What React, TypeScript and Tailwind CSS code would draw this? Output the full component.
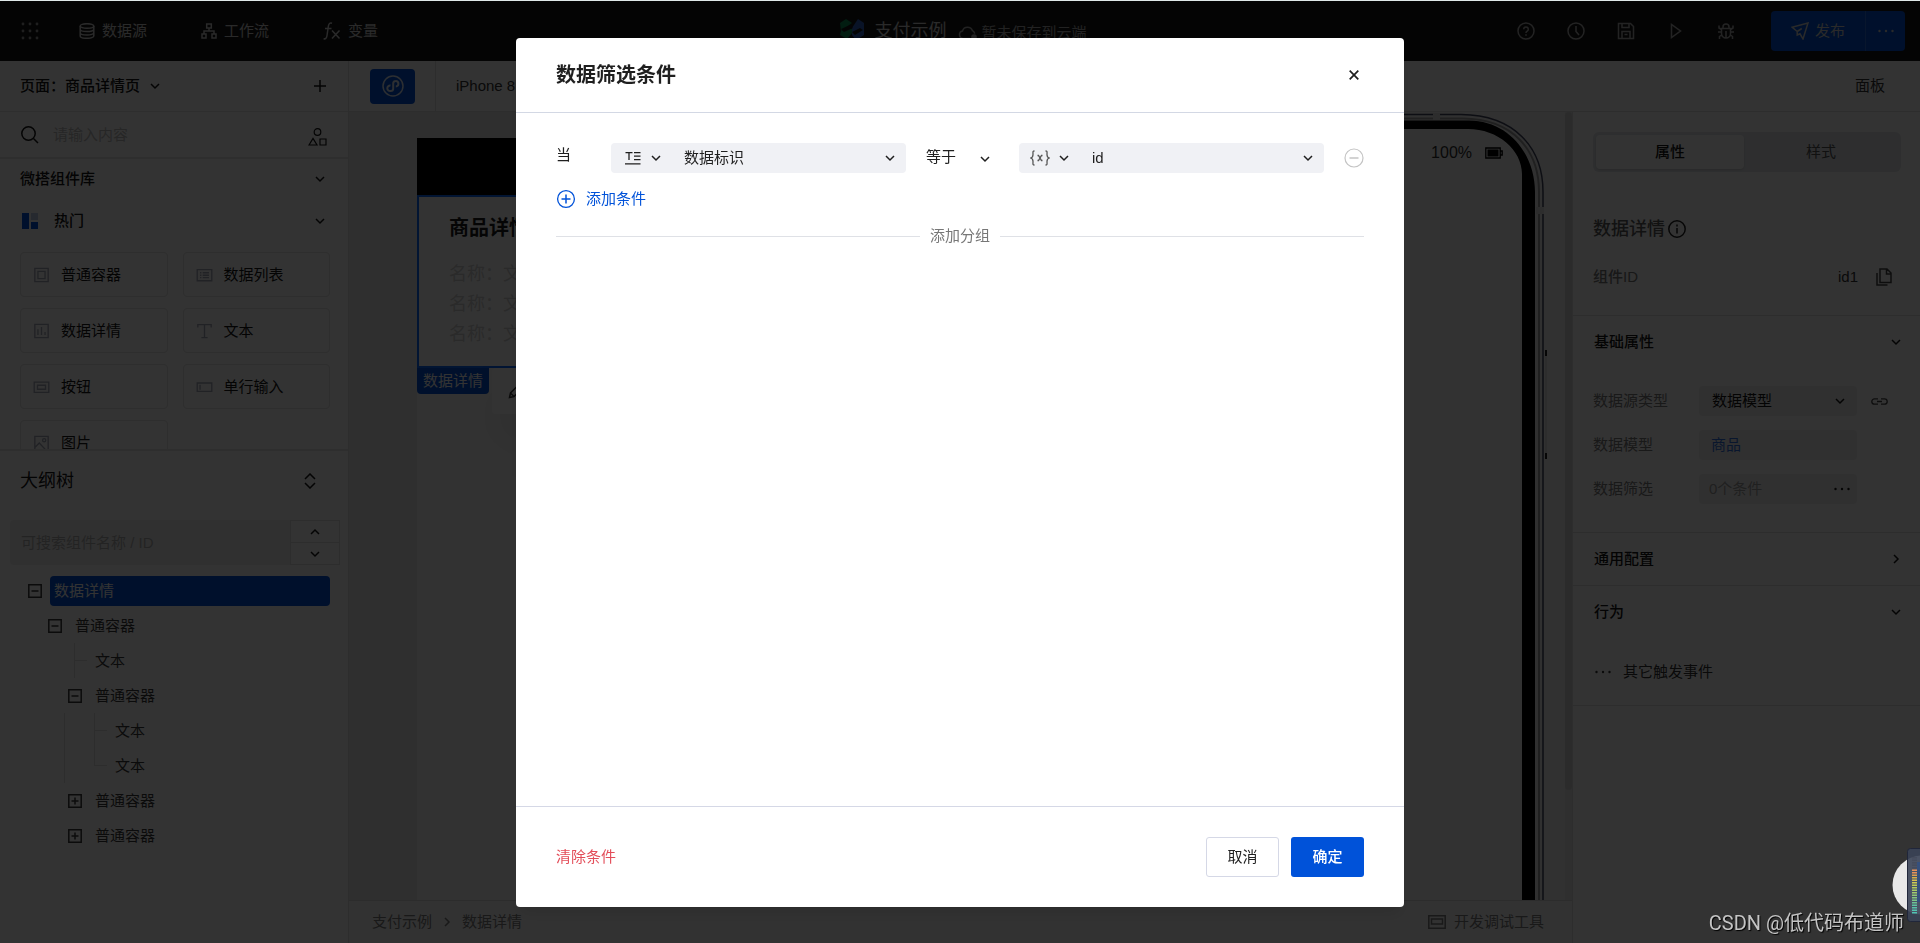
import React from "react";

type IconProps = { className?: string };

const Svg = ({ className = "", box = "0 0 18 18", children }: { className?: string; box?: string; children: React.ReactNode }) => (
  <svg className={`shrink-0 ${className}`} viewBox={box} fill="none" stroke="currentColor" strokeWidth="1.5" aria-hidden="true">
    {children}
  </svg>
);

const Chevron = ({ className = "" }: IconProps) => (
  <Svg className={`h-[10px] w-[10px] ${className}`} box="0 0 10 10">
    <path d="M1 3l4 4 4-4" />
  </Svg>
);

const GridDots = () => (
  <svg className="h-[18px] w-[18px] shrink-0" viewBox="0 0 18 18" fill="currentColor" aria-hidden="true">
    {[2, 9, 16].map((y) => [2, 9, 16].map((x) => <circle key={`${x}-${y}`} cx={x} cy={y} r="1.4" />))}
  </svg>
);

const Database = () => (
  <Svg className="h-4 w-4" box="0 0 16 16">
    <ellipse cx="8" cy="3" rx="6.8" ry="2.3" />
    <path d="M1.2 3v10c0 1.3 3 2.3 6.8 2.3s6.8-1 6.8-2.3V3M1.2 6.3C1.2 7.6 4.2 8.6 8 8.6s6.8-1 6.8-2.3M1.2 9.7c0 1.3 3 2.3 6.8 2.3s6.8-1 6.8-2.3" />
  </Svg>
);

const Workflow = () => (
  <Svg className="h-4 w-4" box="0 0 16 16">
    <path d="M5.7 1h4.6v4H5.7zM1 11h4v4H1zM11 11h4v4h-4zM8 5v3M3 11V8h10v3" />
  </Svg>
);

const Fx = () => (
  <Svg className="h-[18px] w-[18px]">
    <path d="M9 1.2C6.8.6 5.8 1.6 5.4 4L4 13.5C3.6 16 2.700 17.200.6 16.800M2 6.500h6.500M9 8.500l7.500 8M16.500 8.500l-7.500 8" />
  </Svg>
);

const Logo = () => (
  <svg className="h-6 w-6 shrink-0" viewBox="0 0 24 24" aria-hidden="true">
    <path d="M0 4l6-4 6 4-11 8zM1 12l10-3 3 3-7 8-7-4z" fill="#0b8f55" />
    <path d="M12 9l6-9 6 4v12l-8 5-4-5z" fill="#2f62c4" />
    <path d="M1 10l9-4 3 3-9 4zM12 13l8-4 3 2-8 5z" fill="#181818" />
  </svg>
);

const Cloud = () => (
  <Svg className="h-[14px] w-5" box="0 0 20 14">
    <path d="M12 12.500H5a3.800 3.800 0 01-.5-7.500A5.300 5.300 0 0114.500 4.700c1.200.6 2 1.500 2.200 3" />
    <circle cx="16" cy="11" r="2.800" fill="currentColor" stroke="none" />
  </Svg>
);

const Help = () => (
  <Svg className="h-[18px] w-[18px]">
    <circle cx="9" cy="9" r="8" />
    <path d="M6.700 7.200a2.300 2.300 0 113.500 2C9.300 9.800 9 10.200 9 11M9 12.300v1.500" />
  </Svg>
);
const Clock = () => (
  <Svg className="h-[18px] w-[18px]">
    <circle cx="9" cy="9" r="8" />
    <path d="M9 4v5.500l3 3.500" />
  </Svg>
);
const Save = () => (
  <Svg className="h-[18px] w-[18px]">
    <path d="M1.500 1.500h12l3 3v12h-15zM5 16.500V9.500h8v7M5 1.500v4h7v-4M7.500 12.500h3" />
  </Svg>
);
const Play = () => (
  <Svg className="h-[18px] w-[18px]">
    <path d="M4.500 2.500v13l9-6.500z" />
  </Svg>
);
const Bug = () => (
  <Svg className="h-[18px] w-[18px]">
    <path d="M4.500 6.500h9v5a4.500 4.500 0 01-9 0zM6 6.500V5a3 3 0 016 0v1.500M9 9v7M4.500 10H1M17 10h-3.500M4.500 7.500L2 6V3.500M13.500 7.500L16 6V3.500M4.500 13L2.500 14.500V17M13.500 13l2 1.500V17" />
  </Svg>
);
const Send = () => (
  <Svg className="h-[18px] w-[18px]">
    <path d="M17 1L1 5.200 6.200 9.500V13L9 11.800 12 17zM6.200 9.500l4.600-3" />
  </Svg>
);
const Dots = ({ className = "" }: IconProps) => (
  <svg className={`h-[4px] w-[18px] shrink-0 ${className}`} viewBox="0 0 18 4" fill="currentColor" aria-hidden="true">
    <circle cx="2.500" cy="2" r="1.200" />
    <circle cx="9" cy="2" r="1.200" />
    <circle cx="15.500" cy="2" r="1.200" />
  </svg>
);

const cardIcons: Record<string, React.ReactNode> = {
  普通容器: <path d="M1.500 1.500h15v15h-15zM5 5h8v8H5z" />,
  数据列表: <path d="M.8 3h16.400v12.500H.8zM4 6.500h1.500M7 6.500h7M4 9.300h1.500M7 9.300h7M4 12h1.500M7 12h7" />,
  数据详情: <path d="M1.500 1.500h15v15h-15zM5 7v6.500M9 4.500v9M13 10v3.500" />,
  文本: <path d="M1.500 5V1.800h15V5M9 1.800v14.700M5.500 16.500h7" />,
  按钮: <path d="M.8 3.500h16.400v11.500H.8zM4.500 7h9v4.500h-9z" />,
  单行输入: <path d="M.8 4.500h16.400v9.500H.8zM4 6.500v5.500" />,
  图片: (
    <>
      <path d="M1.500 1.500h15v15h-15zM1.500 14l5-5 7 7.500" />
      <circle cx="12" cy="5.800" r="1.800" />
    </>
  ),
};

function TopBar() {
  const nav: [React.ReactNode, string][] = [
    [<Database />, "数据源"],
    [<Workflow />, "工作流"],
    [<Fx />, "变量"],
  ];
  const tools: [string, React.ReactNode][] = [
    ["帮助", <Help />],
    ["历史", <Clock />],
    ["保存", <Save />],
    ["预览", <Play />],
    ["调试", <Bug />],
  ];
  return (
    <header className="flex h-[61px] shrink-0 items-center justify-between bg-[#181818] pl-[21px] pr-[15px] pt-px text-[#d0d0d0]">
      <div className="flex flex-1 items-center">
        <button aria-label="应用" className="mr-10 text-[#9a9a9a]">
          <GridDots />
        </button>
        <nav className="flex items-center gap-[54px]">
          {nav.map(([icon, label]) => (
            <a key={label} href="#" className="flex items-center gap-[7px]">
              {icon}
              {label}
            </a>
          ))}
        </nav>
      </div>
      <div className="flex items-center gap-[11px]">
        <Logo />
        <span className="text-lg leading-6">支付示例</span>
        <span className="flex items-center gap-1 pt-1 text-[#a8a8a8]">
          <Cloud />
          暂未保存到云端
        </span>
      </div>
      <div className="flex flex-1 items-center justify-end">
        <div className="mr-9 flex items-center gap-8 text-[#b0b0b0]">
          {tools.map(([label, icon]) => (
            <button key={label} aria-label={label}>
              {icon}
            </button>
          ))}
        </div>
        <div className="flex h-10 overflow-hidden rounded bg-[#0052d9]">
          <button className="flex w-[94px] items-center justify-center gap-[6px]">
            <Send />
            发布
          </button>
          <button aria-label="更多" className="flex w-10 items-center justify-center border-l border-[#2c70e0]">
            <Dots />
          </button>
        </div>
      </div>
    </header>
  );
}

function Toggle({ open }: { open: boolean }) {
  return (
    <button aria-label={open ? "收起" : "展开"}>
      <Svg className="h-[14px] w-[14px]" box="0 0 14 14">
        <path d={open ? "M.8.8h12.400v12.400H.8zM3.500 7h7" : "M.8.8h12.400v12.400H.8zM3.500 7h7M7 3.500v7"} />
      </Svg>
    </button>
  );
}

function Leaf({ last = false }: { last?: boolean }) {
  return (
    <li className="flex h-[35px] items-center">
      <span className="flex h-full w-[21px] flex-col">
        <span className="h-[18px] w-[13px] border-b border-l border-[#e0e0e0]" />
        <span className={last ? "flex-1" : "flex-1 border-l border-[#e0e0e0]"} />
      </span>
      文本
    </li>
  );
}

function Branch({ open, children }: { open: boolean; children?: React.ReactNode }) {
  return (
    <li>
      <div className="flex h-[35px] items-center gap-[13px]">
        <Toggle open={open} />
        普通容器
      </div>
      {children}
    </li>
  );
}

function Sidebar() {
  return (
    <aside className="flex w-[348px] shrink-0 flex-col bg-white text-[#141414]">
      <div className="flex h-[51px] shrink-0 items-center border-b border-[#e3e3e3] px-5">
        <button className="flex items-center gap-[10px] font-medium">
          页面：商品详情页
          <Chevron />
        </button>
        <button aria-label="新建页面" className="ml-auto mr-[2px]">
          <Svg className="h-3 w-3" box="0 0 12 12">
            <path d="M6 0v12M0 6h12" />
          </Svg>
        </button>
      </div>
      <label className="flex h-[47px] shrink-0 items-center border-b-2 border-[#e3e3e3] px-[21px]">
        <Svg className="h-[18px] w-[18px]">
          <circle cx="7.500" cy="7.500" r="6.700" />
          <path d="M12.500 12.500l4.500 4.500" />
        </Svg>
        <input aria-label="搜索组件" placeholder="请输入内容" className="ml-[14px] min-w-0 flex-1 bg-transparent outline-none placeholder:text-[#bdbdbd]" />
        <Svg className="mt-[5px] h-[18px] w-[19px]" box="0 0 19 18">
          <circle cx="9.500" cy="4" r="3.300" strokeWidth="1.200" />
          <path d="M1 17l4-6.500L9 17zM12 11h6v6h-6z" strokeWidth="1.200" />
        </Svg>
      </label>
      <section className="flex h-[290px] shrink-0 flex-col overflow-hidden">
        <button className="flex h-10 shrink-0 items-center justify-between pl-5 pr-[23px] font-medium">
          微搭组件库
          <Chevron />
        </button>
        <button className="flex h-[43px] shrink-0 items-center pl-[22px] pr-[23px] font-medium">
          <svg className="mr-4 h-4 w-4" viewBox="0 0 16 16" aria-hidden="true">
            <path d="M0 0h7v16H0zM9 9h7v7H9z" fill="#0052d9" />
            <path d="M9 0h7v7H9z" fill="#bccbe8" />
          </svg>
          热门
          <Chevron className="ml-auto" />
        </button>
        <div className="mt-[10px] grid grid-cols-2 gap-x-[15px] gap-y-[11px] pl-5 pr-[18px]">
          {Object.keys(cardIcons).map((name) => (
            <button key={name} className="flex h-[45px] items-center gap-[11px] rounded border border-[#e3e3e3] pl-3 text-left">
              <Svg className="h-4 w-[17px] text-[#a4a8b8]">{cardIcons[name]}</Svg>
              {name}
            </button>
          ))}
        </div>
      </section>
      <section className="flex min-h-0 flex-1 flex-col border-t-2 border-[#e3e3e3]">
        <div className="flex h-[60px] shrink-0 items-center justify-between pl-5 pr-8 text-lg">
          大纲树
          <Svg className="h-4 w-3" box="0 0 12 16">
            <path d="M1 6l5-5 5 5M1 10l5 5 5-5" />
          </Svg>
        </div>
        <div className="mx-[10px] mr-2 mt-[9px] flex h-[45px] shrink-0">
          <input
            aria-label="搜索大纲"
            placeholder="可搜索组件名称 / ID"
            className="min-w-0 flex-1 rounded-l bg-[#f0f0f0] px-[11px] outline-none placeholder:text-[#b0b0b0]"
          />
          <div className="flex w-[50px] flex-col border border-[#e0e0e0]">
            <button aria-label="上一个" className="flex flex-1 items-center justify-center border-b border-[#e0e0e0]">
              <Chevron className="rotate-180" />
            </button>
            <button aria-label="下一个" className="flex flex-1 items-center justify-center">
              <Chevron />
            </button>
          </div>
        </div>
        <ul className="pl-7 pr-[18px] pt-2 text-[#3a3a3a]">
          <li>
            <div className="flex h-[35px] items-center gap-2">
              <Toggle open />
              <span className="flex h-[30px] flex-1 items-center rounded-sm bg-[#0052d9] px-1 text-white">数据详情</span>
            </div>
            <ul className="pl-5">
              <Branch open>
                <ul className="pl-5">
                  <li className="pl-[6px]">
                    <ul>
                      <Leaf />
                    </ul>
                  </li>
                  <Branch open>
                    <ul className="-ml-1 border-l border-[#e0e0e0] pl-[29px]">
                      <Leaf />
                      <Leaf last />
                    </ul>
                  </Branch>
                  <Branch open={false} />
                  <Branch open={false} />
                </ul>
              </Branch>
            </ul>
          </li>
        </ul>
      </section>
    </aside>
  );
}

function PhoneFrame() {
  return (
    <div className="absolute right-[19px] top-0 h-full w-[330px] overflow-hidden">
      <svg className="block h-[800px] w-[330px]" viewBox="0 0 330 800" fill="none" aria-hidden="true">
        <path d="M0 2.500H238C292 3 320 36 320 80V800H0Z" fill="#f0f0f0" />
        <path d="M0 12H245C280 12 306 40 306 80V800H0Z" fill="#fbfbfb" />
        <path d="M0 6.500H240C290 7 316 38 316 80V800" stroke="#a0a0a0" strokeWidth="2" />
        <path d="M0 2.500H238C292 3 320 36 320 80V800" stroke="#40455f" strokeWidth="1.500" />
        <path d="M0 8.500H246C286 9 312 42 312 80V800H299V62C299 38 275 17 245 17H0Z" fill="#000" />
        <path d="M210 1h7v7h-7zM313 95h8v7h-8z" fill="#e0e0e0" />
        <path d="M322 238h2v6h-2zM322 341h2v6h-2z" fill="#222" />
        <path d="M323 244v97" stroke="#d0d0d0" />
      </svg>
      <span className="absolute right-[81px] top-[29px] text-base leading-6 text-[#303030]">100%</span>
      <svg className="absolute right-[50px] top-[35px] h-3 w-[18px]" viewBox="0 0 18 12" aria-hidden="true">
        <path d="M.8 1h14.400v10H.8zM15.200 4h2v4h-2" fill="none" stroke="#000" strokeWidth="1.300" />
        <path d="M2.500 2.500h11v7h-11z" fill="#000" />
      </svg>
    </div>
  );
}

function Canvas() {
  return (
    <main className="flex min-w-0 flex-1 flex-col border-l border-[#e0e0e0]">
      <div className="relative flex min-h-0 flex-1 overflow-hidden bg-[#f2f2f2]">
        <div className="flex w-[750px] flex-col bg-[#e8e8e8] pl-[68px] pt-[26px]">
          <div className="h-[57px] shrink-0 bg-black" />
          <div className="flex flex-1 flex-col items-start bg-[#fbfbfb]">
            <div className="h-[173px] w-full border-2 border-[#0a68ff] bg-white pl-[30px] pt-[15px]">
              <h2 className="text-xl font-bold leading-8 text-[#1c1c1c]">商品详情</h2>
              <div className="mt-[15px] text-lg leading-[30px] text-[#d0d0d0]">
                <p>名称：文本</p>
                <p>名称：文本</p>
                <p>名称：文本</p>
              </div>
            </div>
            <div className="flex items-start gap-[3px]">
              <span className="flex h-[26px] items-center rounded-b bg-[#0052d9] px-[6px] text-white">数据详情</span>
              <div className="flex h-[46px] w-40 items-center rounded bg-white pl-4 text-[#333] shadow-2xl">
                <Svg className="h-4 w-4" box="0 0 16 16">
                  <path d="M1.500 14.500l1-4.500L11 1.500l3.500 3.500L6 13.500zM2.500 10L6 13.500" />
                </Svg>
              </div>
            </div>
          </div>
        </div>
        <PhoneFrame />
        <div className="absolute bottom-0 right-0 top-0 w-[7px] bg-[#eaeaea]">
          <div className="h-[86%] rounded-full bg-[#d8d8d8]" />
        </div>
      </div>
      <footer className="flex h-[43px] shrink-0 items-center justify-between border-t border-[#dcdcdc] bg-[#fafafa] pl-[23px] pr-7 text-[#7c7c7c]">
        <div className="flex items-center gap-[10px]">
          <a href="#">支付示例</a>
          <Chevron className="-rotate-90" />
          <a href="#">数据详情</a>
        </div>
        <button className="flex items-center gap-2">
          <Svg className="h-[14px] w-[18px]" box="0 0 18 14">
            <path d="M.8.8h16.400v12.400H.8zM3.500 4h11v5h-11z" />
          </Svg>
          开发调试工具
        </button>
      </footer>
    </main>
  );
}

function CanvasToolbar() {
  return (
    <div className="flex h-[51px] shrink-0 items-center border-b border-l border-[#dedede] bg-white pl-[21px] pr-[35px] text-[#333]">
      <button aria-label="小程序" className="flex h-[35px] w-[45px] items-center justify-center rounded bg-[#0052d9] text-[#dfe8f8]">
        <Svg className="h-[22px] w-[22px]" box="0 0 22 22">
          <circle cx="11" cy="11" r="10" />
          <path d="M8.500 10.500a2.800 2.800 0 10.200 5.500c1.500 0 2.500-1 2.500-2.500V8.500C11.200 7 12.200 6 13.600 6a2.700 2.700 0 01.2 5.400" strokeWidth="2" />
        </Svg>
      </button>
      <div className="ml-5 flex h-full flex-1 items-center border-l border-[#dedede] pl-5">iPhone 8</div>
      <button>面板</button>
    </div>
  );
}

function Section({ title, open = true, children }: { title: string; open?: boolean; children?: React.ReactNode }) {
  return (
    <section className="border-t border-[#e0e0e0]">
      <button className="flex h-[52px] w-full items-center justify-between pl-[21px] pr-[19px] font-medium">
        {title}
        <Chevron className={open ? "" : "-rotate-90"} />
      </button>
      {children}
    </section>
  );
}

function Inspector() {
  return (
    <aside className="flex w-[348px] shrink-0 flex-col border-l border-[#e0e0e0] bg-white text-[#141414]">
      <div className="ml-5 mr-[19px] mt-5 grid h-10 shrink-0 grid-cols-[148px_1fr] rounded-md bg-[#e4e7eb] p-[3px]">
        <button className="rounded-sm bg-white font-medium shadow-sm">属性</button>
        <button className="text-[#555]">样式</button>
      </div>
      <h2 className="ml-5 mt-11 flex items-center gap-[3px] text-lg font-medium leading-[26px] text-[#5c5c5c]">
        数据详情
        <Svg className="h-[18px] w-[18px] text-[#222]">
          <circle cx="9" cy="9" r="8.200" />
          <path d="M9 8v5.500M9 4.500V6.500" />
        </Svg>
      </h2>
      <div className="mb-[26px] ml-5 mr-7 mt-[23px] flex h-6 items-center">
        <span className="mr-auto font-medium text-[#777]">组件ID</span>
        <span className="mr-[18px] text-[#333]">id1</span>
        <button aria-label="复制">
          <Svg className="h-[18px] w-4 text-[#444]" box="0 0 16 18">
            <path d="M4 1h7l4 4v9.500H4zM10.500 1v5H15M1 5v12h10.500" />
          </Svg>
        </button>
      </div>
      <Section title="基础属性">
        <div className="flex flex-col gap-[14px] pb-7 pl-5 pt-[18px] text-[#7c7c7c]">
          <div className="flex h-[30px] items-center">
            <label htmlFor="source-type" className="w-[106px]">
              数据源类型
            </label>
            <span className="relative h-full w-[158px]">
              <select id="source-type" className="h-full w-full appearance-none rounded bg-[#f0f0f0] px-[13px] text-[#141414]">
                <option>数据模型</option>
              </select>
              <Chevron className="pointer-events-none absolute right-3 top-[10px] text-[#141414]" />
            </span>
            <Svg className="ml-[14px] h-[7px] w-[17px] text-[#444]" box="0 0 17 7">
              <path d="M7 .8H3.500a2.700 2.700 0 000 5.400H7M10 .8h3.500a2.700 2.700 0 010 5.400H10M6 3.500h5" strokeWidth="1.300" />
            </Svg>
          </div>
          <div className="flex h-[30px] items-center">
            <span className="w-[106px]">数据模型</span>
            <a href="#" className="flex h-full w-[158px] items-center rounded bg-[#f0f0f0] px-3 text-[#2f6fe0]">
              商品
            </a>
          </div>
          <div className="flex h-[30px] items-center">
            <span className="w-[106px]">数据筛选</span>
            <button className="flex h-full w-[158px] items-center justify-between rounded bg-[#f0f0f0] pl-[10px] pr-[6px] text-[#a0a0a0]">
              0个条件
              <Dots className="text-[#141414]" />
            </button>
          </div>
        </div>
      </Section>
      <Section title="通用配置" open={false} />
      <Section title="行为">
        <button className="mb-[21px] ml-[21px] mt-[22px] flex h-6 items-center gap-[11px] text-[#333]">
          <Dots />
          其它触发事件
        </button>
        <div className="border-t border-[#e0e0e0]" />
      </Section>
    </aside>
  );
}

function ValuePicker({ icon, label, value, className }: { icon: React.ReactNode; label: string; value: string; className: string }) {
  return (
    <div className={`relative flex h-[30px] items-center rounded bg-[#f0f1f5] ${className}`}>
      <button aria-label={`${label}类型`} className="flex w-[50px] items-center justify-between pl-[11px]">
        {icon}
        <Chevron />
      </button>
      <select aria-label={label} className="h-full min-w-0 flex-1 appearance-none bg-transparent pl-[23px]">
        <option>{value}</option>
      </select>
      <Chevron className="pointer-events-none absolute right-[11px] top-[10px]" />
    </div>
  );
}

function FilterDialog() {
  return (
    <div className="fixed inset-x-0 bottom-0 top-px flex justify-center bg-black/80 pb-9 pt-[37px]">
      <section
        role="dialog"
        aria-modal="true"
        aria-labelledby="filter-title"
        className="flex h-full w-[888px] flex-col rounded bg-white text-[#1f1f1f] shadow-lg"
      >
        <header className="flex h-[75px] shrink-0 items-center justify-between border-b border-[#d3d8e4] px-10">
          <h1 id="filter-title" className="text-xl font-bold">
            数据筛选条件
          </h1>
          <button aria-label="关闭" className="mr-[5px]">
            <Svg className="h-[10px] w-[10px]" box="0 0 10 10">
              <path d="M.7.7l8.600 8.600M9.300.7L.7 9.300" strokeWidth="1.700" />
            </Svg>
          </button>
        </header>
        <div className="flex-1 px-10 pt-[30px]">
          <div className="flex items-center">
            <span className="w-[55px] pb-[6px]">当</span>
            <ValuePicker
              className="w-[295px]"
              label="字段"
              value="数据标识"
              icon={
                <Svg className="ml-[3px] h-[14px] w-4" box="0 0 16 14">
                  <path d="M.5 1.700h7M4 1.700V9M9 1.700h6.500M9 5.200h6.500M9 8.700h6.500M0 12.800h15.500" strokeWidth="1.300" />
                </Svg>
              }
            />
            <div className="relative ml-5 w-[64px]">
              <select aria-label="比较方式" className="w-full appearance-none bg-transparent pb-[2px]">
                <option>等于</option>
              </select>
              <Chevron className="pointer-events-none absolute right-0 top-[9px]" />
            </div>
            <ValuePicker
              className="ml-[29px] w-[305px]"
              label="值"
              value="id"
              icon={
                <Svg className="h-4 w-5 text-[#555]" box="0 0 20 16">
                  <path d="M4.500 1C2.500 1 3 2 3 4.500S2.500 7.500.8 8C2.500 8.500 3 9 3 11.500S2.500 15 4.500 15M15.500 1C17.500 1 17 2 17 4.500S17.500 7.500 19.200 8C17.500 8.500 17 9 17 11.500S17.500 15 15.500 15M7.500 5.500h1L11.500 10.500h1M12.500 5.500h-1L8.500 10.500h-1" strokeWidth="1.300" />
                </Svg>
              }
            />
            <button aria-label="删除条件" className="ml-auto text-[#c4c4c4]">
              <Svg className="h-5 w-5" box="0 0 20 20">
                <circle cx="10" cy="10" r="9" strokeWidth="1.200" />
                <path d="M5.500 10h9" />
              </Svg>
            </button>
          </div>
          <button className="mt-[14px] flex h-6 items-center gap-[10px] text-[#0052d9]">
            <Svg className="h-5 w-5" box="0 0 20 20">
              <circle cx="10" cy="10" r="8.400" strokeWidth="1.300" />
              <path d="M5.500 10h9M10 5.500v9" />
            </Svg>
            添加条件
          </button>
          <div className="mt-[13px] flex h-6 items-center gap-[10px] text-[#777]">
            <span className="h-px flex-1 bg-[#dfe1e6]" />
            <button>添加分组</button>
            <span className="h-px flex-1 bg-[#dfe1e6]" />
          </div>
        </div>
        <footer className="flex h-[101px] shrink-0 items-center border-t border-[#d5d8e6] px-10">
          <button className="mr-auto text-[#e34d59]">清除条件</button>
          <button className="mr-3 h-10 w-[73px] rounded-[3px] border border-[#d5d8e6]">取消</button>
          <button className="h-10 w-[73px] rounded-[3px] bg-[#0052d9] font-medium text-white">确定</button>
        </footer>
      </section>
    </div>
  );
}

const meterColors = [
  "#454b5c", "#454b5c", "#454b5c", "#454b5c", "#454b5c", "#e8925a", "#e8925a", "#e0a050", "#d8b048", "#d8c050",
  "#cccb55", "#c0cc58", "#b4cc5c", "#a8cc66", "#a0cc70", "#90c878", "#84c880", "#7cc888", "#6cc494", "#60c4a0",
  "#58c4a8", "#54c4b0", "#50c4b4",
];

function FloatingMeter() {
  return (
    <svg className="fixed bottom-[19px] right-0 h-[76px] w-7" viewBox="0 0 28 76" aria-hidden="true">
      <circle cx="30" cy="37" r="29.500" fill="#e8e8e8" />
      <rect x="15.500" y=".5" width="30" height="73" rx="3" fill="#3a4257" fillOpacity=".9" stroke="#20263a" />
      <path d="M25 14h3v40h-3z" fill="#35507e" />
      {meterColors.map((c, i) => (
        <rect key={i} x="20" y={9 + i * 2.5} width="5" height="1.500" fill={c} />
      ))}
    </svg>
  );
}

export default function App() {
  return (
    <div className="flex h-screen flex-col overflow-hidden border-t border-[#dfe8e8] font-['Liberation_Sans','Noto_Sans_CJK_SC',sans-serif] text-[15px] leading-6">
      <div className="-mt-px h-px shrink-0 bg-[#dfe8e8]" />
      <div className="-mt-px flex min-h-0 flex-1 flex-col pt-px">
        <div className="-mt-px flex min-h-0 flex-1 flex-col">
          <TopBar />
          <div className="flex min-h-0 flex-1">
            <Sidebar />
            <div className="flex min-w-0 flex-1 flex-col">
              <CanvasToolbar />
              <div className="flex min-h-0 flex-1">
                <Canvas />
                <Inspector />
              </div>
            </div>
          </div>
        </div>
      </div>
      <FilterDialog />
      <FloatingMeter />
      <p className="fixed bottom-1 right-4 font-['Roboto','Noto_Sans_CJK_SC',sans-serif] text-xl leading-8 text-[#c4c4c4] [text-shadow:1px_1px_1px_#000]">
        CSDN @低代码布道师
      </p>
    </div>
  );
}
